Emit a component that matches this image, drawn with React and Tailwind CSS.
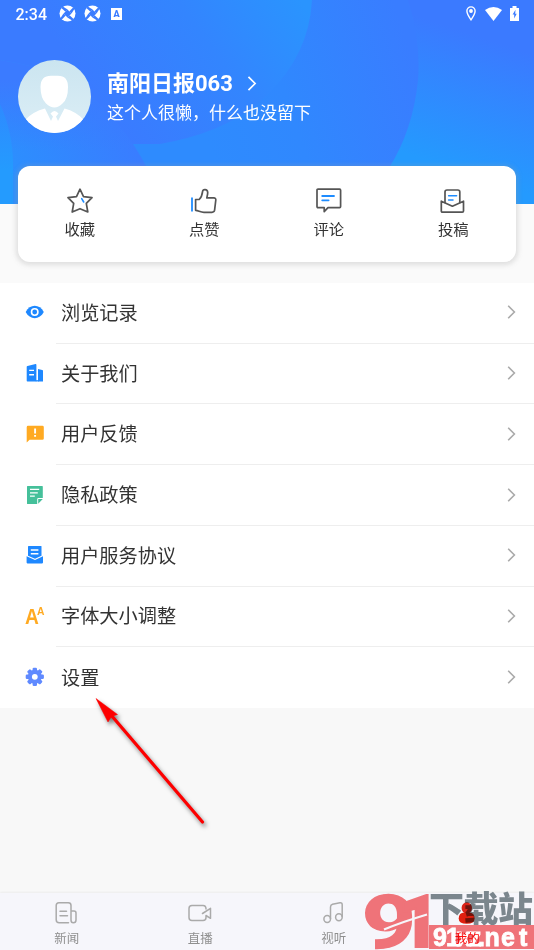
const shortcuts = [
  { label: '收藏', Icon: StarIcon },
  { label: '点赞', Icon: ThumbIcon },
  { label: '评论', Icon: CommentIcon },
  { label: '投稿', Icon: SubmitIcon },
];

const menu = [
  { label: '浏览记录', Icon: EyeIcon },
  { label: '关于我们', Icon: BuildingIcon },
  { label: '用户反馈', Icon: FeedbackIcon },
  { label: '隐私政策', Icon: PolicyIcon },
  { label: '用户服务协议', Icon: AgreementIcon },
  { label: '字体大小调整', Icon: FontSizeIcon },
  { label: '设置', Icon: GearIcon },
];

function StarIcon() {
  return (
    <svg className="w-[26px] h-[26px]" viewBox="0 0 26 26" fill="none" strokeLinejoin="round" strokeLinecap="round">
      <path d="M13 1.2 L16.5 8.6 L25 9.6 L19.3 15.4 L20.8 24 L13 20.7 L5.2 24 L6.7 15.4 L1 9.6 L9.5 8.6 Z" stroke="#555" strokeWidth="1.7" />
      <path d="M14.7 10.6 L16.7 14" stroke="#1e8cff" strokeWidth="1.6" />
    </svg>
  );
}

function ThumbIcon() {
  return (
    <svg className="w-[26px] h-[26px]" viewBox="0 0 26 26" fill="none" strokeLinejoin="round">
      <path d="M1 9.5 V23.5" stroke="#1e8cff" strokeWidth="1.8" />
      <path d="M4.6 11.5 H8.2 C10.3 9.5 11.2 7 11.6 3.4 C11.9 .8 16.4 .8 16.7 4.2 C16.8 6 16.2 8 15.8 9.9 H22.8 Q25 10 24.8 12 L23.6 22.2 Q23.2 24.3 21 24.3 H13 C9.4 24.3 7.5 22.5 4.6 22.3 Z" stroke="#555" strokeWidth="1.7" />
    </svg>
  );
}

function CommentIcon() {
  return (
    <svg className="w-[26px] h-[26px]" viewBox="0 0 26 26" fill="none" strokeLinejoin="round" strokeLinecap="round">
      <path d="M2 1.2 H23.6 Q24.6 1.2 24.6 2.2 V18.6 Q24.6 19.6 23.6 19.6 H12 L8.2 23.7 V19.6 H2 Q1 19.6 1 18.6 V2.2 Q1 1.2 2 1.2 Z" stroke="#555" strokeWidth="1.7" />
      <path d="M6.2 8 H18 M6.2 12.3 H12.6" stroke="#1e8cff" strokeWidth="1.8" />
    </svg>
  );
}

function SubmitIcon() {
  return (
    <svg className="w-[26px] h-[26px]" viewBox="0 0 26 26" fill="none" strokeLinejoin="round" strokeLinecap="round">
      <path d="M5 14.5 V4 Q5 2 7 2 H17.8 Q19.8 2 19.8 4 V14.5" stroke="#555" strokeWidth="1.7" />
      <path d="M1.3 13.2 L12.4 18.2 L23.5 13.2 V23 Q23.5 24.2 22.3 24.2 H2.5 Q1.3 24.2 1.3 23 Z" stroke="#555" strokeWidth="1.7" />
      <path d="M8.6 7.8 H16.6 M8.6 11.9 H13" stroke="#1e8cff" strokeWidth="1.5" />
    </svg>
  );
}

function EyeIcon() {
  return (
    <svg className="w-5 h-5" viewBox="0 0 20 20">
      <path d="M.7 10 C4.7 1.8 14.7 1.8 18.8 10 C14.7 18.2 4.7 18.2 .7 10 Z" fill="#1e88ff" />
      <circle cx="9.7" cy="10" r="3.2" fill="none" stroke="#fff" strokeWidth="1.6" />
    </svg>
  );
}

function BuildingIcon() {
  return (
    <svg className="w-5 h-5" viewBox="0 0 20 20">
      <path d="M1.7 4 Q1.7 3.2 2.5 3 L10.6 1.1 Q11.4 1 11.4 1.9 V18.4 H2.4 Q1.7 18.4 1.7 17.8 Z M13 6 L17.2 6.9 Q18 7.1 18 7.8 V18.4 H13 Z" fill="#1e88ff" />
      <path d="M10.8 17.8 H13.8" stroke="#1e88ff" strokeWidth="1.3" />
      <path d="M4.2 7.4 H9 M4.2 11.8 H9" stroke="#fff" strokeWidth="1.4" />
    </svg>
  );
}

function FeedbackIcon() {
  return (
    <svg className="w-5 h-5" viewBox="0 0 20 20">
      <path d="M3 1.8 H17.4 Q18.8 1.8 18.8 3.2 V14.4 Q18.8 15.8 17.4 15.8 H4.6 L1.7 18.4 V3.2 Q1.7 1.8 3 1.8 Z" fill="#ffaa22" />
      <path d="M10.1 4.4 V9.4 M10.1 11 V12.8" stroke="#fff" strokeWidth="1.9" />
    </svg>
  );
}

function PolicyIcon() {
  return (
    <svg className="w-5 h-5" viewBox="0 0 20 20">
      <path d="M2.6 .9 H17.2 Q17.8 .9 17.8 1.5 V13 H13.4 Q12.2 13 12.2 14.2 V19 H2.6 Q2 19 2 18.4 V1.5 Q2 .9 2.6 .9 Z M13.2 14 H17.8 L13.2 18.8 Z" fill="#45c09a" />
      <path d="M5 4.4 H14.2 M5 7.8 H12.8 M5 11.2 H9.8" stroke="#fff" strokeWidth="1.3" />
    </svg>
  );
}

function AgreementIcon() {
  return (
    <svg className="w-5 h-5" viewBox="0 0 20 20">
      <path d="M3.5 1 H15.9 Q16.5 1 16.5 1.6 V10.8 L10 13.8 L3 10.8 V1.6 Q3 1 3.5 1 Z" fill="#1e88ff" />
      <path d="M1.6 11.2 L10 15 L18 11.2 V17.6 Q18 18.4 17.2 18.4 H2.4 Q1.6 18.4 1.6 17.6 Z" fill="#1e88ff" />
      <path d="M5.8 5 H13.4 M5.8 8.7 H13.4" stroke="#fff" strokeWidth="1.4" />
    </svg>
  );
}

function FontSizeIcon() {
  return (
    <div className="w-5 h-5 flex text-[#ffaa22] font-bold font-['Liberation_Sans']">
      <span className="w-[12px] text-[22px] leading-[21px] origin-left scale-x-[.87]">A</span>
      <span className="text-[11.5px] leading-[11px] origin-left scale-x-90">A</span>
    </div>
  );
}

function GearIcon() {
  return (
    <svg className="w-5 h-5" viewBox="0 0 20 20">
      <g fill="#608aff">
        {[0, 45, 90, 135].map((a) => (
          <rect key={a} x="7.6" y=".7" width="4.4" height="18.2" rx="1.2" transform={`rotate(${a} 9.8 9.8)`} />
        ))}
        <circle cx="9.8" cy="9.8" r="7" />
      </g>
      <circle cx="9.8" cy="9.8" r="2.9" fill="#fff" />
    </svg>
  );
}

function Chevron({ className }) {
  return (
    <svg className={className} viewBox="0 0 9 14" fill="none" stroke="currentColor" strokeWidth="1.6">
      <path d="M1.2 .8 L7.4 7 L1.2 13.2" />
    </svg>
  );
}

function HeaderBackground() {
  return (
    <svg className="absolute inset-0 w-full h-full" viewBox="0 0 534 204" preserveAspectRatio="none">
      <defs>
        <linearGradient id="base" x1="490" y1="40" x2="440" y2="190" gradientUnits="userSpaceOnUse">
          <stop offset="0" stopColor="#3b7aff" />
          <stop offset=".85" stopColor="#249afe" />
        </linearGradient>
        <linearGradient id="big" x1="420" y1="80" x2="210" y2="150" gradientUnits="userSpaceOnUse">
          <stop offset="0" stopColor="#397dff" />
          <stop offset=".6" stopColor="#3088fe" />
          <stop offset="1" stopColor="#2e8bfe" />
        </linearGradient>
        <linearGradient id="top" x1="120" y1="130" x2="300" y2="0" gradientUnits="userSpaceOnUse">
          <stop offset="0" stopColor="#3a7bff" />
          <stop offset=".55" stopColor="#3385fe" />
          <stop offset="1" stopColor="#2a94fe" />
        </linearGradient>
        <linearGradient id="left" x1="130" y1="140" x2="20" y2="190" gradientUnits="userSpaceOnUse">
          <stop offset="0" stopColor="#397dff" />
          <stop offset="1" stopColor="#2c8ffe" />
        </linearGradient>
        <linearGradient id="leftTop" x1="0" y1="80" x2="0" y2="150" gradientUnits="userSpaceOnUse">
          <stop offset="0" stopColor="#3b7bff" />
          <stop offset="1" stopColor="#3b7bff" stopOpacity="0" />
        </linearGradient>
        <linearGradient id="corner" x1="0" y1="100" x2="0" y2="170" gradientUnits="userSpaceOnUse">
          <stop offset="0" stopColor="#2f89ff" />
          <stop offset="1" stopColor="#249bfe" />
        </linearGradient>
      </defs>
      <rect width="534" height="204" fill="url(#base)" />
      <path d="M0 0 H408 Q421 40 418 80 Q413 130 389 168 V204 H0 Z" fill="url(#big)" />
      <path d="M0 0 H312 Q309 55 267 95 Q230 132 160 144 H0 Z" fill="url(#top)" />
      <path d="M0 60 Q65 70 92 97 Q128 130 147 168 V204 H0 Z" fill="url(#left)" />
      <path d="M0 60 Q65 70 92 97 Q128 130 147 168 V204 H0 Z" fill="url(#leftTop)" />
      <path d="M0 104 Q14 135 13 170 V204 H0 Z" fill="url(#corner)" />
    </svg>
  );
}

function Aperture() {
  return (
    <svg className="w-[17px] h-[17px]" viewBox="0 0 17 17">
      <circle cx="8.5" cy="8.5" r="8" fill="#fff" />
      <g fill="#3b7cff">
        <path d="M8.5 4.6 L12.4 8.5 L8.5 12.4 L4.6 8.5 Z" />
        {[0, 90, 180, 270].map((a) => (
          <path key={a} d="M8.6 4.5 L3.8 1.4 L2.4 2.9 L6.4 6.8 Z" transform={`rotate(${a} 8.5 8.5)`} />
        ))}
      </g>
    </svg>
  );
}

function StatusBar() {
  return (
    <div className="relative h-[27px] pl-[15.5px] pr-[15px] flex items-center text-white">
      <span className="w-[43.5px] pt-[2px] text-[16px] font-medium font-[Roboto]">2:34</span>
      <Aperture />
      <span className="w-2" />
      <Aperture />
      <span className="ml-[10px] w-[11px] h-3 bg-white text-[#3b7cff] text-[9px] leading-3 font-black text-center font-[Roboto]">A</span>
      <div className="ml-auto flex items-center">
        <svg className="w-[10px] h-[15px]" viewBox="0 0 10 15" fill="none" stroke="#fff" strokeWidth="1.4">
          <path d="M5 .9 C2.5 .9 .9 2.8 .9 5 C.9 8 5 13.8 5 13.8 C5 13.8 9.1 8 9.1 5 C9.1 2.8 7.5 .9 5 .9 Z" />
          <circle cx="5" cy="5" r="1.2" fill="#fff" />
        </svg>
        <svg className="ml-[9px] w-[17px] h-[14px]" viewBox="0 0 17 14">
          <path d="M0 3 Q8.5 -3 17 3 L8.5 14 Z" fill="#fff" />
        </svg>
        <svg className="ml-2 w-[9px] h-[15px]" viewBox="0 0 9 15">
          <path d="M0 2 H2.5 V0 H6.5 V2 H9 V15 H0 Z" fill="#fff" />
          <path d="M5.5 3.8 L2.6 8.4 H4.2 V12.5 L6.7 7.7 H5.2 Z" fill="#3b7aff" />
        </svg>
      </div>
    </div>
  );
}

function Avatar() {
  return (
    <svg className="w-[73px] h-[73px] shrink-0" viewBox="0 0 73 73">
      <defs>
        <clipPath id="face"><circle cx="36.5" cy="36.5" r="36.5" /></clipPath>
        <linearGradient id="sky" x1="0" y1="0" x2="0" y2="1">
          <stop stopColor="#cbe5f0" />
          <stop offset="1" stopColor="#dceef6" />
        </linearGradient>
      </defs>
      <g clipPath="url(#face)">
        <rect width="73" height="73" fill="url(#sky)" />
        <path d="M22.5 27 Q22.5 15.8 33 15.8 H40 Q50 15.8 50 27 Q50 39 44.5 43.5 Q36.5 51.5 28 43.5 Q22.5 38 22.5 27 Z" fill="#fff" />
        <path d="M7 60 Q15 51.5 27 48.5 L33 61 L35 56.5 L32.5 53.5 Q36.5 48.5 40.5 53.5 L38 56.5 L40 61 L46.5 48.5 Q58 51.5 66 60 V73 H7 Z" fill="#fff" />
      </g>
    </svg>
  );
}

function NewsIcon() {
  return (
    <svg className="w-6 h-6" viewBox="0 0 24 24" fill="none" stroke="#aaa" strokeWidth="1.5" strokeLinecap="round">
      <path d="M13.5 21.8 H4.2 Q1.2 21.8 1.2 18.8 V4.5 Q1.2 1.8 3.9 1.8 H13.3 Q16 1.8 16 4.5 V19 Q16 21.8 18.3 21.8 Q21 21.8 21 19 V12 Q21 10 19 10 H16" />
      <path d="M5 10.2 H11.5 M5 14.8 H12.5" />
    </svg>
  );
}

function LiveIcon() {
  return (
    <svg className="w-6 h-6" viewBox="0 0 24 24" fill="none" stroke="#aaa" strokeWidth="1.5" strokeLinecap="round" strokeLinejoin="round">
      <path d="M18 8 Q18 4.5 15 4.5 H4 Q1 4.5 1 7.5 V16.5 Q1 19.5 4 19.5 H15 Q18 19.5 18 16.5 V14.5 L22.5 17.3 V7.3 L14.5 12.5" />
    </svg>
  );
}

function MusicIcon() {
  return (
    <svg className="w-6 h-6" viewBox="0 0 24 24" fill="none" stroke="#aaa" strokeWidth="1.5">
      <path d="M8.5 18 V6 Q8.5 3.8 10.5 3.3 L18 1.8 Q20.2 1.5 20.2 3.8 V16" />
      <ellipse cx="5.2" cy="18" rx="3.3" ry="3.5" />
      <ellipse cx="16.9" cy="16.3" rx="3.3" ry="3.5" />
    </svg>
  );
}

function PersonIcon() {
  return (
    <svg className="w-6 h-6" viewBox="0 0 24 24">
      <ellipse cx="11.8" cy="7" rx="5.2" ry="5.8" fill="#e3251a" />
      <path d="M3.7 17.5 Q3.7 11.5 9.5 11.5 H14 Q19.6 11.5 19.6 17.5 Q19.6 22.8 11.7 22.8 Q3.7 22.8 3.7 17.5 Z" fill="#e8200f" />
    </svg>
  );
}

const tabs = [
  { label: '新闻', Icon: NewsIcon },
  { label: '直播', Icon: LiveIcon },
  { label: '视听', Icon: MusicIcon },
  { label: '我的', Icon: PersonIcon, active: true },
];

function Watermark() {
  return (
    <svg className="absolute left-[360px] top-[886px] w-[174px] h-[64px]" viewBox="0 0 174 64">
      <g fill="#ef7379" stroke="#ef7379" fontFamily="Roboto">
        <text x="2" y="62" fontSize="74" fontWeight="700" strokeWidth="1.5" textLength="54" lengthAdjust="spacingAndGlyphs">9</text>
        <text x="38" y="61" fontSize="73" fontWeight="900" strokeWidth="2" textLength="42" lengthAdjust="spacingAndGlyphs">1</text>
      </g>
      <path d="M24 43.5 Q42 36 67 28.5" stroke="#f6f6fb" strokeWidth="2.2" fill="none" />
      <text x="69" y="35.5" fontSize="35" fontWeight="900" fill="#7b868d" textLength="104" fontFamily="Noto Sans CJK SC">下载站</text>
      <rect x="69" y="39" width="105" height="24" fill="#ef7379" />
      <text x="73 86 97 109 118 124.5 141 159" y="60" fontSize="25" fontWeight="bold" fill="#fff" stroke="#fff" strokeWidth=".8" fontFamily="Liberation Sans">91xz.net</text>
    </svg>
  );
}

function Arrow() {
  return (
    <svg className="absolute left-[85px] top-[690px] w-[135px] h-[150px] drop-shadow-[2px_3px_2px_rgba(0,0,0,0.5)]" viewBox="0 0 135 150">
      <path d="M26 25 L117.5 132" stroke="#fd0000" strokeWidth="3.2" strokeLinecap="round" />
      <path d="M11 8.5 L32.5 24.5 L28 26 L25.5 28 L23 32 Z" fill="#fd0000" stroke="#fd0000" strokeWidth=".5" />
    </svg>
  );
}

export default function App() {
  return (
    <div className="relative w-[534px] h-[950px] overflow-hidden flex flex-col bg-[#f8f8f8] text-[#333] font-['Roboto','Noto_Sans_CJK_SC',sans-serif]">
      <div className="relative h-[204px] shrink-0">
        <HeaderBackground />
        <StatusBar />
        <div className="relative flex items-center pl-[18px] pt-[33px] text-white">
          <Avatar />
          <div className="ml-4 pt-[2px]">
            <div className="flex items-center">
              <h1 className="text-[22px] leading-[30px] font-bold">南阳日报063</h1>
              <Chevron className="ml-[14px] w-[10px] h-[15px]" />
            </div>
            <p className="text-[17px] leading-[28px] whitespace-nowrap">这个人很懒，什么也没留下</p>
          </div>
        </div>
      </div>

      <div className="relative -mt-[38px] h-[117px] shrink-0 px-[18px] before:content-[''] before:absolute before:inset-x-0 before:top-[38px] before:bottom-0 before:bg-[#fafafa]">
        <div className="relative h-24 grid grid-cols-4 rounded-[12px] bg-white shadow-[0_1px_5px_2px_rgba(160,160,160,0.3)]">
          {shortcuts.map(({ label, Icon }) => (
            <div key={label} className="flex flex-col items-center pt-[22px] pr-px">
              <Icon />
              <span className="mt-1 text-[15.3px] leading-6">{label}</span>
            </div>
          ))}
        </div>
      </div>

      <div className="h-[425px] shrink-0 bg-white flex flex-col">
        {menu.map(({ label, Icon }, i) => (
          <div key={label} className="flex-1 flex items-center pl-[25px]">
            <div className="-mt-[2px]">
              <Icon />
            </div>
            <div
              className={`ml-[11px] pl-[5px] pr-[18px] flex-1 self-stretch flex items-center justify-between ${
                i < menu.length - 1 ? 'border-b border-[#eee]' : ''
              }`}
            >
              <span className="pt-[2px] text-[19.2px] leading-7">{label}</span>
              <Chevron className="-mt-px w-[9px] h-[14px] text-[#aaa]" />
            </div>
          </div>
        ))}
      </div>

      <Watermark />

      <div className="mt-auto h-[57px] grid grid-cols-4 bg-[#f6f6fb] shadow-[0_-1px_2px_rgba(0,0,0,0.05)]">
        {tabs.map(({ label, Icon, active }) => (
          <div
            key={label}
            className={`flex flex-col items-center pt-2 ${
              active ? 'relative text-[#ff0f0f] mix-blend-multiply' : 'text-[#8f8f8f]'
            }`}
          >
            <Icon />
            <span className="mt-[5px] text-[12.5px] leading-[18px]">{label}</span>
          </div>
        ))}
      </div>

      <Arrow />
    </div>
  );
}
